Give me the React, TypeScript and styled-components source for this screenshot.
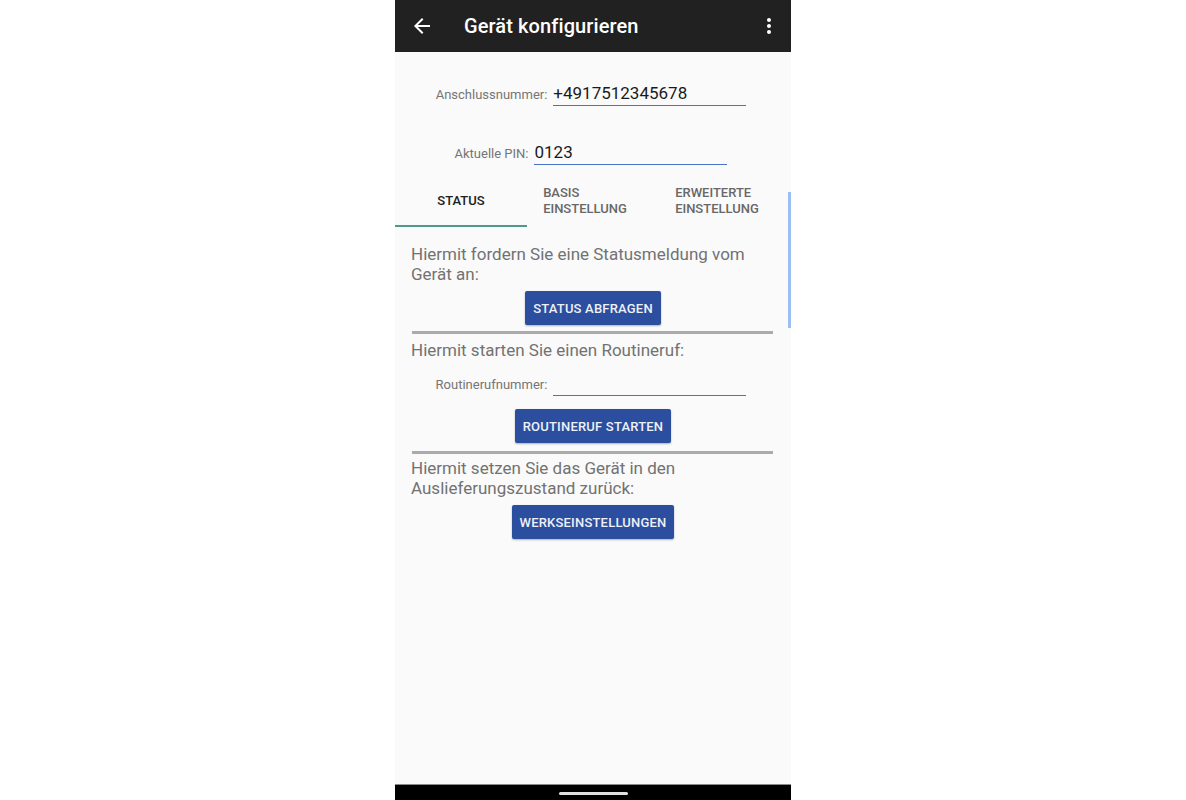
import React from 'react';
import styled, { createGlobalStyle } from 'styled-components';

const GlobalStyle = createGlobalStyle`
  html, body {
    margin: 0;
    padding: 0;
    background: #ffffff;
    font-family: Roboto, "Liberation Sans", sans-serif;
  }
`;

// Telefon-Rahmen
const Phone = styled.div`
  width: 396px;
  height: 800px;
  margin: 0 auto;
  background: #fafafa;
  display: flex;
  flex-direction: column;
  position: relative;
  overflow: hidden;
`;

const AppBar = styled.header`
  height: 52px;
  flex-shrink: 0;
  background: #212121;
  display: flex;
  align-items: center;
  padding: 0 10px 0 15px;
  color: #ffffff;
`;

const IconButton = styled.span`
  width: 24px;
  height: 24px;
  display: flex;
  align-items: center;
  justify-content: center;
`;

const Title = styled.h1`
  margin: 0 0 0 30px;
  flex: 1;
  font-size: 20px;
  font-weight: 500;
  letter-spacing: 0.1px;
`;

const Content = styled.main`
  flex: 1;
  display: flex;
  flex-direction: column;
`;

const FieldRow = styled.div<{ $top: number }>`
  display: flex;
  align-items: baseline;
  justify-content: center;
  gap: 6px;
  margin-top: ${p => p.$top}px;
  padding-right: 4px;
`;

const FieldLabel = styled.span`
  font-size: 13px;
  color: #757575;
`;

const FieldInput = styled.div<{ $empty?: boolean }>`
  width: 193px;
  height: ${p => (p.$empty ? 27 : 26)}px;
  box-sizing: border-box;
  padding-top: ${p => (p.$empty ? 4 : 3)}px;
  font-size: 17px;
  line-height: 20px;
  color: #1a1a1a;
  border-bottom: 1px solid #4a73c4;
`;

const Tabs = styled.nav`
  display: flex;
  margin-top: 10px;
  height: 52px;
`;

const Tab = styled.div<{ $width: number; $active?: boolean }>`
  width: ${p => p.$width}px;
  box-sizing: border-box;
  display: flex;
  align-items: center;
  justify-content: center;
  padding-top: 2px;
  font-size: 13px;
  font-weight: 500;
  line-height: 16px;
  text-transform: uppercase;
  color: ${p => (p.$active ? '#202020' : '#686868')};
  border-bottom: 2px solid ${p => (p.$active ? '#4e9a87' : 'transparent')};
`;

const TabLabel = styled.span`
  text-align: left;
`;

const Section = styled.section`
  padding: 0 16px;
  display: flex;
  flex-direction: column;
`;

const Hint = styled.p<{ $top: number }>`
  margin: ${p => p.$top}px 0 0 0;
  font-size: 17px;
  line-height: 20px;
  color: #727272;
`;

const ActionButton = styled.button<{ $top: number }>`
  align-self: center;
  margin-top: ${p => p.$top}px;
  height: 34px;
  padding: 0 8px;
  border: none;
  border-radius: 2px;
  background: #2b4e9f;
  color: #eef1f8;
  font-family: Roboto, "Liberation Sans", sans-serif;
  font-size: 13px;
  font-weight: 500;
  letter-spacing: 0.2px;
  box-shadow: 0 1px 2px rgba(0, 0, 0, 0.3);
`;

const Divider = styled.hr<{ $top: number }>`
  margin: ${p => p.$top}px 2px 0 1px;
  border: none;
  height: 3px;
  background: #ababab;
`;

const ScrollThumb = styled.div`
  position: absolute;
  right: 0;
  top: 192px;
  width: 3px;
  height: 136px;
  background: #9bbff2;
`;

const NavBar = styled.footer`
  height: 16px;
  flex-shrink: 0;
  background: #000000;
  border-top: 1px solid #8a8a8a;
  display: flex;
  justify-content: center;
  padding-top: 7px;
  box-sizing: border-box;
`;

const HomePill = styled.div`
  width: 69px;
  height: 3px;
  border-radius: 2px;
  background: #e0e0e0;
`;

export default function App() {
  return (
    <>
      <GlobalStyle />
      <Phone>
        <AppBar>
          <IconButton>
            <svg width="24" height="24" viewBox="0 0 24 24" fill="#ffffff">
              <path d="M20 11H7.83l5.59-5.59L12 4l-8 8 8 8 1.41-1.41L7.83 13H20v-2z" />
            </svg>
          </IconButton>
          <Title>Gerät konfigurieren</Title>
          <IconButton>
            <svg width="24" height="24" viewBox="0 0 24 24" fill="#ffffff">
              <path d="M12 8c1.1 0 2-.9 2-2s-.9-2-2-2-2 .9-2 2 .9 2 2 2zm0 2c-1.1 0-2 .9-2 2s.9 2 2 2 2-.9 2-2-.9-2-2-2zm0 6c-1.1 0-2 .9-2 2s.9 2 2 2 2-.9 2-2-.9-2-2-2z" />
            </svg>
          </IconButton>
        </AppBar>

        <Content>
          <FieldRow $top={28}>
            <FieldLabel>Anschlussnummer:</FieldLabel>
            <FieldInput>+4917512345678</FieldInput>
          </FieldRow>
          <FieldRow $top={33}>
            <FieldLabel>Aktuelle PIN:</FieldLabel>
            <FieldInput>0123</FieldInput>
          </FieldRow>

          <Tabs>
            <Tab $width={132} $active>
              <TabLabel>Status</TabLabel>
            </Tab>
            <Tab $width={116}>
              <TabLabel>Basis<br />Einstellung</TabLabel>
            </Tab>
            <Tab $width={148}>
              <TabLabel>Erweiterte<br />Einstellung</TabLabel>
            </Tab>
          </Tabs>

          <Section>
            <Hint $top={17}>Hiermit fordern Sie eine Statusmeldung vom Gerät an:</Hint>
            <ActionButton $top={7}>STATUS ABFRAGEN</ActionButton>
            <Divider $top={6} />

            <Hint $top={6}>Hiermit starten Sie einen Routineruf:</Hint>
            <FieldRow $top={9}>
              <FieldLabel>Routinerufnummer:</FieldLabel>
              <FieldInput $empty>&nbsp;</FieldInput>
            </FieldRow>
            <ActionButton $top={13}>ROUTINERUF STARTEN</ActionButton>
            <Divider $top={8} />

            <Hint $top={4}>Hiermit setzen Sie das Gerät in den Auslieferungszustand zurück:</Hint>
            <ActionButton $top={7}>WERKSEINSTELLUNGEN</ActionButton>
          </Section>
        </Content>

        <ScrollThumb />
        <NavBar>
          <HomePill />
        </NavBar>
      </Phone>
    </>
  );
}
